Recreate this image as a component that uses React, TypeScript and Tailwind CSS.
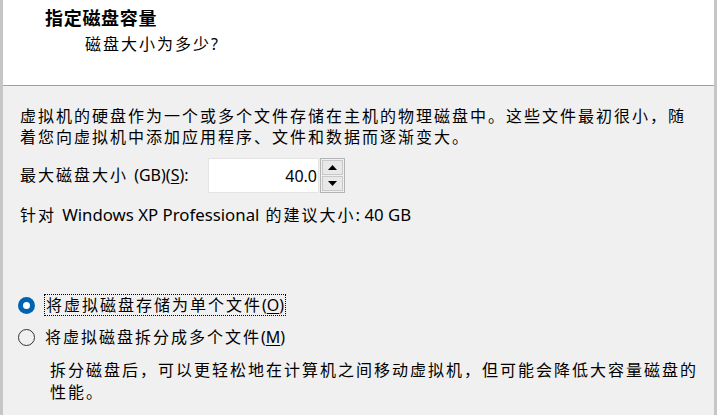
import type { ReactNode } from 'react'

const font = 'font-["Noto_Sans","Noto_Sans_CJK_SC",sans-serif]'

function En({ children, wide }: { children: ReactNode; wide?: boolean }) {
  return <span className={wide ? 'text-[16.8px] tracking-normal' : 'tracking-normal'}>{children}</span>
}

function Key({ children }: { children: ReactNode }) {
  return <span className="underline underline-offset-2">{children}</span>
}

function SpinBox({ value }: { value: string }) {
  return (
    <div className="flex h-[35px] items-stretch">
      <div className="flex w-[111px] items-center justify-end border border-[#e4e4e4] bg-white pr-[1px] text-[16px] tracking-normal text-black">
        {value}
      </div>
      <div className="ml-[1px] flex w-[25px] flex-col gap-[1px] border border-[#b4b4b4] p-[1px]">
        <div className="flex flex-1 items-center justify-center border border-[#c8c8c8] bg-[#e8e8e8]">
          <svg width="9" height="5" viewBox="0 0 9 5">
            <path d="M0 5 L4.5 0 L9 5 Z" fill="#000" />
          </svg>
        </div>
        <div className="flex flex-1 items-center justify-center border border-[#c8c8c8] bg-[#e8e8e8]">
          <svg width="9" height="5" viewBox="0 0 9 5">
            <path d="M0 0 L9 0 L4.5 5 Z" fill="#000" />
          </svg>
        </div>
      </div>
    </div>
  )
}

function Radio({ checked }: { checked: boolean }) {
  if (checked) {
    return (
      <span className="flex h-[17px] w-[17px] items-center justify-center rounded-full bg-[#0063b1]">
        <span className="h-[7px] w-[7px] rounded-full bg-white" />
      </span>
    )
  }
  return <span className="h-[17px] w-[17px] rounded-full border border-[#333333]" />
}

export default function App() {
  return (
    <div
      className={`flex h-[415px] w-[717px] flex-col overflow-hidden border-x-[3px] border-[#c6c6c6] bg-[#f0f0f0] text-[16px] tracking-[2px] text-black ${font}`}
    >
      <div className="h-[86px] shrink-0 border-b border-[#a0a0a0] bg-white pl-[42px] pt-[7px]">
        <div className="text-[18px] font-bold leading-[22px] tracking-[0.7px]">指定磁盘容量</div>
        <div className="ml-[40px] mt-[4px] leading-[22px]">
          磁盘大小为多少<En>?</En>
        </div>
      </div>

      <div className="flex flex-col pl-[17px] pt-[20px]">
        <p className="leading-[21px]">
          虚拟机的硬盘作为一个或多个文件存储在主机的物理磁盘中。这些文件最初很小，随
          <br />
          着您向虚拟机中添加应用程序、文件和数据而逐渐变大。
        </p>

        <div className="mt-[10px] flex items-center">
          <span className="w-[188px] leading-[21px]">
            最大磁盘大小 <En>(GB)(<Key>S</Key>):</En>
          </span>
          <SpinBox value="40.0" />
        </div>

        <p className="mt-[11px] leading-[21px]">
          针对 <En wide>Windows XP Professional</En> 的建议大小<En wide>: 40 GB</En>
        </p>

        <div className="mt-[68px] flex items-center">
          <span className="-ml-[2px] flex w-[26px]">
            <Radio checked />
          </span>
          <span className="border border-dotted border-black px-[1px] leading-[20px]">
            将虚拟磁盘存储为单个文件<En>(<Key>O</Key>)</En>
          </span>
        </div>

        <div className="mt-[10px] flex items-center">
          <span className="-ml-[2px] flex w-[27px]">
            <Radio checked={false} />
          </span>
          <span className="leading-[22px]">
            将虚拟磁盘拆分成多个文件<En>(<Key>M</Key>)</En>
          </span>
        </div>

        <p className="ml-[30px] mt-[11px] leading-[22px]">
          拆分磁盘后，可以更轻松地在计算机之间移动虚拟机，但可能会降低大容量磁盘的
          <br />
          性能。
        </p>
      </div>
    </div>
  )
}
